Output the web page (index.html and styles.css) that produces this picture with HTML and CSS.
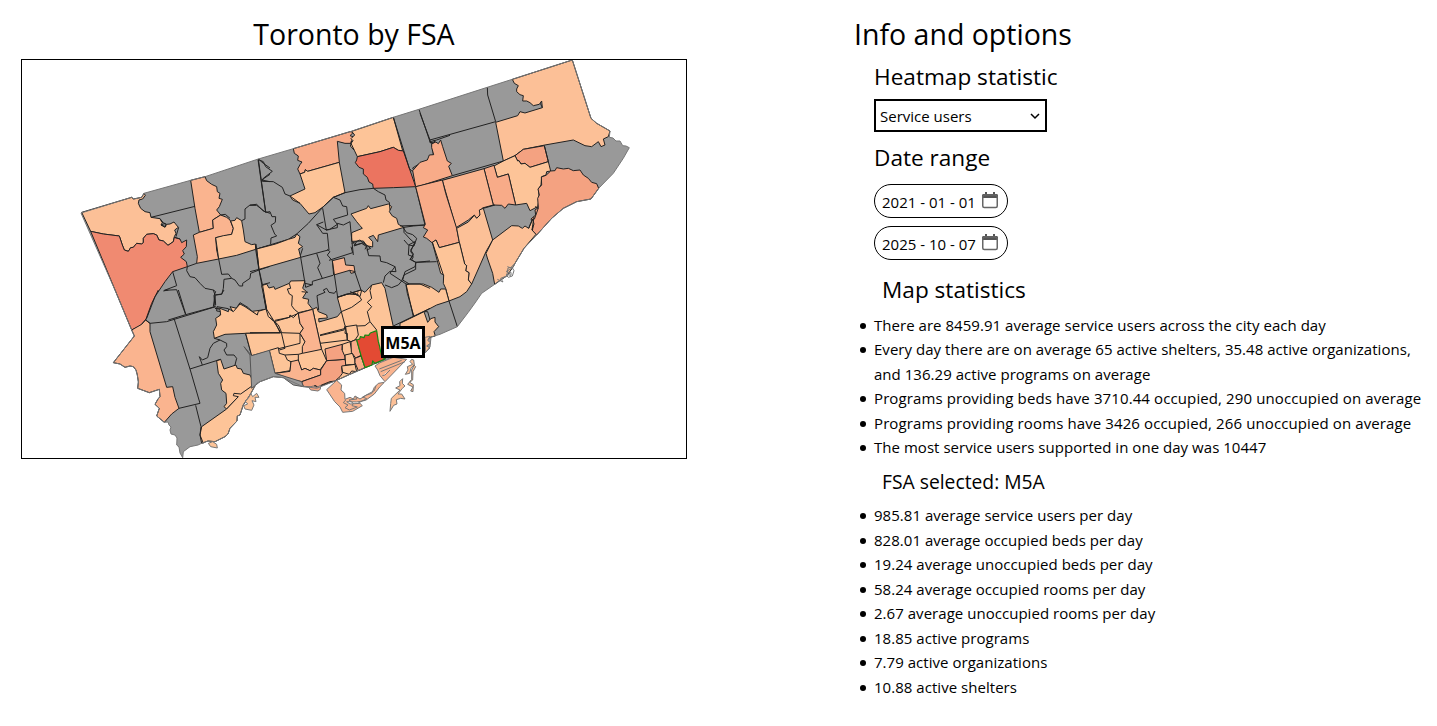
FILE: index.html
```html
<!DOCTYPE html>
<html lang="en">
<head>
<meta charset="utf-8">
<title>Toronto by FSA</title>
<link rel="stylesheet" href="styles.css">
</head>
<body>
<main class="page">
<section class="map-panel">
<h1 class="title">Toronto by FSA</h1>
<div class="map-frame">
<svg class="map" viewBox="22 60 664 398" role="img" aria-label="Toronto FSA heatmap">
<!-- City silhouette -->
<path id="city" class="land" d="M81 213 131.7 197.3 134 199 141.7 197.3 144 193.3 190.7 180.3 205 176.7 258.3 159 293.3 148.7 350 131.7 393.3 117.3 419 109.3 487.3 87.3 512.3 79.3 572.3 60 591 118.3 596.7 123.3 610 131 609.3 137.3 613 138 616 141 620 141 622.7 145.7 626 146 629.3 147.7 623.3 158.3 613.3 173.3 598.7 188.3 591 199 576.7 201.7 563.3 208.3 551.7 218.3 536.7 235 524 248.3 515 263.3 513 267 508 268 506.7 276 500 280 494.7 284.3 481.7 293.3 475 303 468.3 312.3 457.3 326.7 440 334.3 431 337 430 347 425 353 400 354 363.3 368.3 335 381 316.7 388.3 301.7 386 283.3 377.7 273.3 376.7 260 381.7 256.7 383.3 250 395 243 405 240 415 237.3 416 237 421 230 428.3 228 434 225 436.7 215 441.7 208 441 201.7 443.3 198 445 190 446.7 183.3 451.7 182.7 457.7 180 453 179 447 176.7 445 177 438 175 435 171 434 170 430 171 427 169 425 168 422 164.3 422.3 156.7 416 159.3 408.3 155 404.3 158 399 160 396.7 159.3 389.3 149.3 392.7 137.7 388.3 138.5 382 137.3 375 136 370 133.3 366.7 130 366 125 367.3 120 364 113.3 362.7 134.3 336 131.7 330 115 290Z"/>

<!-- North-west -->
<g class="areas" transform="translate(70 140) scale(.33333)">
<path class="c2" d="M35 217 185 172 190 177 215 172 222 160 226 166 218 177 207 180 205 190 212 205 225 215 240 218 243 232 270 236 278 246 273 255 285 262 290 253 300 252 312 246 325 262 314 270 318 280 313 290 310 305 294 316 280 303 267 300 260 285 250 281 230 283 220 295 220 308 215 312 200 310 190 322 182 323 175 334 163 330 157 315 148 288 100 282 62 274Z"/>
<path class="c6" d="M62 274 100 282 148 288 157 315 163 330 175 334 182 323 190 322 200 310 215 312 220 308 220 295 230 283 250 281 260 285 267 300 280 303 294 316 310 305 313 292 330 297 335 308 350 300 349 320 338 332 343 342 332 352 349 365 352 380 308 395 285 425 255 470 230 535 210 558 185 570Z"/>
<path class="c3" d="M362 121 405 110 410 122 425 133 440 140 442 155 450 160 447 175 457 178 448 200 440 210 452 225 428 240 430 265 388 277 375 205Z"/>
<path class="c3" d="M370 285 388 277 430 265 428 240 452 225 470 232 480 240 490 265 485 283 460 289 437 293 440 330 446 357 380 370 382 350Z"/>
<path class="c1" d="M437 293 460 287 485 283 490 265 482 243 495 241 500 233 515 242 520 270 525 305 545 314 556 312 557 328 500 346 446 357Z"/>
<path class="line" d="M243 232 375 199M270 236 275 246 290 253M352 380 380 370M273 255 285 250 287 260ZM308 395 320 437 283 451 320 449 347 524M295 540 347 524 435 500M352 380 350 392 360 410 375 413 390 430 405 445 430 450 437 455 432 467 435 500M446 357 455 403 475 402 485 415 495 420 508 438 518 438 518 430 540 415 542 400 567 390 557 328M485 415 462 418 460 445 455 463 437 465M441 500 440 513 455 515 445 535M441 500 475 506 480 518 500 503 510 488 535 503 557 527 570 512 590 510 600 515M567 390 590 510M515 242 525 237 525 207 540 195 560 193 580 213 600 220M565 57 587 215M565 57 580 70 600 84M575 120 600 103M575 120 600 125M557 328 600 316M567 390 600 379M577 434 600 428M452 225 466 223 480 235M326 262 318 290M313 292 330 297"/>
</g>

<!-- North -->
<g class="areas" transform="translate(250 100) scale(.33333)">
<path class="c4" d="M130 146 300 95 310 97 300 107 309 110 303 130 285 130 262 124 268 187 173 214 166 209 164 217 150 222 143 207 150 194 156 186 143 181 145 168 133 160Z"/>
<path class="c1" d="M305 94 430 52 458 152 445 151 430 142 390 155 322 170 313 151 301 138 304 129 309 122 303 116 314 105Z"/>
<path class="c7" d="M322 170 390 155 430 142 445 151 460 153 497 260 430 263 370 265 368 252 357 246 352 232 340 222 340 207 327 202 316 188 320 180Z"/>
<path class="c1" d="M150 222 164 217 166 209 173 214 268 187 285 278 250 292 220 320 195 338 177 342 150 310 128 300 120 288 165 267Z"/>
<path class="c1" d="M303 342 350 325 355 317 362 326 415 312 425 320 418 335 427 348 440 355 445 373 462 382 385 405 383 425 370 406 356 412 368 425 368 441 350 437 340 423 305 424 305 398 337 385 330 377 320 365Z"/>
<path class="line" d="M24 178 47 337M24 178 40 185 47 200 67 214 40 235 37 244 70 245 97 262 105 282 120 288M0 316 20 316 47 337 60 335 66 350 77 350 76 367 63 376 74 402 80 408 63 414 62 432M20 447 115 418 140 402 175 370 220 320M220 320 250 292 285 278 330 269 370 265M250 292 270 300 278 318 290 320 293 345M293 345 250 358 262 373 238 389 228 390M218 325 229 390 200 374 220 366M200 374 218 400 232 400 237 450M228 390 262 383 262 370 280 375 300 365 303 397 310 465M370 265 385 275 405 285 408 300 418 307 420 330M462 382 490 378 525 375 497 260 525 256 600 235M430 52 478 205 485 213 493 214 488 204M488 204 510 190 530 182 550 165 547 135M507 28 540 125 560 120 600 106M540 125 545 132 555 130 552 120M462 382 462 397 480 417 495 430 482 450 490 462 480 480M303 124 303 130 313 151M320 425 312 438 340 428 362 445 350 450M120 288 150 310M158 445 150 470"/>
</g>

<!-- North-east -->
<g class="areas" transform="translate(420 55) scale(.33333)">
<path class="c4" d="M-22 347 0 322 22 315 28 300 41 299 35 278 35 267 47 261 55 266 62 255 68 275 82 318 94 325 86 334 97 362 0 393 -13 395Z"/>
<path class="c2" d="M277 73 457 15 513 190 530 205 570 228 565 245 550 252 555 270 543 275 535 260 515 275 495 272 460 255 375 270 310 283 285 302 250 318 227 202 293 182 300 170 315 174 367 158 365 138 358 148 340 152 330 143 320 138 308 138 310 122 300 119 290 110 290 102 295 92 283 85Z"/>
<path class="c5" d="M285 302 310 283 373 272 385 320 330 337 315 325 303 327 297 317 293 318Z"/>
<path class="c1" d="M222 333 250 318 285 302 293 318 297 317 303 327 315 325 330 337 385 320 392 348 380 350 378 360 365 365 363 390 355 402 358 430 353 455 330 467 320 445 287 450 265 357 232 367Z"/>
<path class="c5" d="M392 348 405 347 410 338 430 342 445 340 460 347 480 345 490 360 505 370 515 382 530 386 536 400 513 432 470 440 430 460 395 490 350 540 337 530 340 505 333 492 347 480 345 465 355 458 353 430 358 420 354 402 365 390 364 366 378 361Z"/>
<path class="c4" d="M192 341 222 331 232 367 265 357 287 450 265 447 255 460 245 451 220 450Z"/>
<path class="c3" d="M67 376 192 341 220 450 187 459 180 480 170 490 163 480 145 495 108 518Z"/>
<path class="line" d="M202 97 203 120 227 200M0 175 30 255 227 200M30 255 30 263 47 261M97 362 250 318M367 158 361 145M373 272 385 320"/>
</g>

<!-- East -->
<g class="areas" transform="translate(400 150) scale(.33333)">
<path class="c4" d="M47 110 127 90 137 130 170 235 178 277 118 293 108 270 96 278 80 265 70 261 83 240 70 233 76 223Z"/>
<path class="c2" d="M170 235 205 216 223 196 230 205 240 195 238 180 250 175 278 270 258 305 215 402 205 390 207 368 197 362 200 347 194 342 178 277Z"/>
<path class="c1" d="M97 277 108 270 118 293 178 277 194 342 200 347 197 362 207 368 205 390 215 402 200 425 180 440 147 453 137 415 130 400 131 375 122 370Z"/>
<path class="c2" d="M278 270 335 227 355 228 367 235 375 228 386 235 398 207 402 222 396 240 408 253 372 295 345 340 340 350 320 378 284 403 278 370 262 324 258 310Z"/>
<path class="c1" d="M18 405 28 402 70 402 95 412 117 427 122 417 137 417 147 453 110 465 72 485 42 500 22 430Z"/>
<path class="c1" d="M0 520 72 485 83 517 92 506 105 502 105 516 116 530 102 545 106 558 90 562 80 570 0 560Z"/>
<path class="line" d="M147 453 172 530M97 277 130 375M250 175 285 165M386 235 398 207M405 170 415 174 403 208M0 228 75 225M10 234 20 248 38 254 50 265 42 288 27 285 25 315 40 320 35 330 48 337 80 336 110 335M48 337 45 350 15 365 8 390 28 402M402 200 396 240"/>
<path class="shore" d="M345 340 335 350 342 362 337 378 325 382 318 375 330 370 319 364 336 355 322 350M320 378 302 385 309 396 292 388M326 366 333 367 333 376 323 374"/>
</g>

<!-- Central districts -->
<g class="areas" transform="translate(250 220) scale(.33333)">
<path class="c1" d="M20 87 77 72 115 58 135 52 140 42 150 50 145 70 158 80 146 87 152 112 27 148Z"/>
<path class="c3" d="M247 122 283 113 287 135 312 137 315 157 303 160 299 151 251 165Z"/>
<path class="c1" d="M35 197 50 192 57 204 72 200 75 208 118 190 122 183 165 182 158 205 170 215 158 234 176 238 174 250 188 268 200 262 205 275 230 285 232 294 206 296 207 306 262 290 274 275 262 232 333 210 345 217 365 195 395 188 405 205 430 320 405 417 345 443 255 483 205 500 155 498 130 480 70 460 57 390 5 407 -13 342 -60 260 0 275 50 268Z"/>
<path class="line" d="M18 72 20 87 27 148 38 197 50 268M0 155 27 148M0 270 20 285 30 272 50 268M152 112 165 190 187 195 187 184 249 166M152 112 235 90M200 100 210 130 203 143 217 175M232 88 240 95 232 105 247 122 263 232M237 121 308 98 303 80M299 151 316 155M315 157 333 210M165 190 167 202 185 195M225 217 201 227 206 270M225 217 220 210 230 205 237 217 253 220 258 213M262 232 333 210M155 215 174 217M335 211 330 230 305 218M308 65 315 75 335 70 350 80 356 107 390 108 392 124 410 128 435 140 438 155 420 154 405 168 400 188M435 140 420 160 455 183 445 195 425 203 405 195M455 183 462 165 497 148 497 127 540 123M462 60 475 75 495 65 482 95 490 105 480 118 497 127M455 183 468 192 480 245 490 290M468 192 510 192 540 205M525 275 533 275 540 300M430 318 540 265M305 70 330 60 350 78 345 88M300 215 320 222 325 217"/>
<path class="line" d="M118 190 122 205 112 207 118 222 127 227 125 257 133 268 145 278M75 301 118 292 120 285 130 293 145 278 188 268M50 268 72 303 85 315 95 338M262 232 290 222 325 224 335 240 305 262 274 275M274 275 285 317 282 330 210 347M188 268 215 390M145 278 150 310 160 325 150 340 165 365 157 405M365 195 360 212 365 235 352 247 365 260 352 275 360 305 345 317 322 318 300 330 285 317M360 305 380 330"/>
</g>

<!-- South-west -->
<g class="areas" transform="translate(100 290) scale(.33333)">
<path class="c1" d="M345 55 360 55 385 65 387 57 400 65 420 42 435 50 472 75 475 64 498 57 505 80 525 95 540 128 437 130 375 133 343 145 340 125 350 105 347 85 362 75 360 58Z"/>
<path class="c1" d="M437 130 540 128 600 130 600 160 508 183 455 197Z"/>
<path class="c3" d="M95 120 125 103 137 90 150 100 150 125 200 292 218 290 225 322 237 355 215 372 193 397 170 378 178 355 165 343 174 327 180 320 178 298 148 308 113 295 115 276 112 255 108 240 100 230 90 228 75 232 60 222 40 218 103 138Z"/>
<path class="c1" d="M350 212 362 208 372 237 408 225 412 235 424 237 430 250 450 255 460 275 470 280 415 320 380 357 372 350 380 340 378 310 365 300 362 280 368 270 355 250Z"/>
<path class="c1" d="M305 410 380 357 415 320 400 317 402 310 422 312 470 278 450 315 430 345 420 375 412 378 411 393 390 415 384 432 375 440 345 455 324 453 305 460 300 435Z"/>
<path class="line" d="M137 90 150 100 200 95 347 50M137 90 155 40 175 0M235 0 257 72M222 85 270 237 300 340 237 355M270 237 362 208M287 346 303 410 300 435 310 460M307 225 298 200 307 210 323 203 330 175 340 160 360 150 380 160 380 170 372 180 380 195 402 195 410 205 405 225M343 145 360 150M340 0 345 15 340 50"/>
<path class="line" d="M498 57 490 10M508 183 527 250 540 252M347 45 345 15 365 12 372 0M190 3 205 0"/>
<path class="c1 shore" d="M452 310 458 320 470 310 477 322 465 322 468 335 456 332 462 345 455 361 435 357 431 347 443 342 435 333 445 325ZM325 460 338 455 350 463 352 474 332 470Z"/>
</g>

<!-- Downtown and islands -->
<g class="areas" transform="translate(250 310) scale(.33333)">
<path class="c3" d="M145 10 188 -2 215 120 157 135 157 110 165 95 150 70 160 55 150 40Z"/>
<path class="c1" d="M58 121 85 113 88 130 105 135 112 150 123 155 120 182 75 190Z"/>
<path class="c1" d="M145 133 157 130 215 118 230 152 210 180 190 175 180 182 165 175 155 180 145 155Z"/>
<path class="c3" d="M75 190 120 184 123 155 145 150 155 180 165 175 180 182 190 175 212 180 212 195 155 215 130 210Z"/>
<path class="c5" d="M155 215 212 195 212 180 230 152 285 148 289 166 275 172 277 190 270 200 255 213 240 215 215 225 205 232 195 226 188 232 160 230Z"/>
<path class="c5" d="M225 117 277 103 276 120 285 128 285 148 230 152Z"/>
<path class="c1" d="M287 50 320 45 325 75 315 90 303 95 292 90 292 70 285 70Z"/>
<path class="c1" d="M277 103 300 95 307 130 285 140 277 122Z"/>
<path class="c4" d="M303 95 320 88 333 136 317 144 304 127Z"/>
<path class="c1" d="M285 135 307 130 315 150 315 163 287 165Z"/>
<path class="c4" d="M315 145 333 138 345 173 325 182 315 158Z"/>
<path class="c1" d="M275 168 300 165 315 163 320 185 305 183 298 193 278 187Z"/>
<path class="line" d="M0 68 90 69M60 23 72 35 95 72 105 115 88 120M72 35 115 23 145 10M210 100 292 90M105 135 145 133M287 50 292 92M210 75 287 55"/>
<path class="harbor" d="M0 135 -18 110 5 137 58 121 75 190 155 215 160 230 130 225 100 203 70 200 30 215 5 235Z"/>
<path class="c3 shore" d="M375 168 390 158 430 142 470 148 405 215 390 197 383 180ZM388 177 455 151M392 185 465 155M397 197 405 195 420 180"/>
<path class="c2 shore" d="M485 148 480 155 488 163 472 170 474 180 466 193 479 190 483 175 492 165 497 170 489 185 488 210 479 217 490 224 489 245 482 243 489 231 473 223 485 208 485 180 493 165 491 150Z"/>
<path class="c2 shore" d="M458 206 449 215 450 227 437 234 450 240 424 265 422 281 420 304 431 286 441 282 439 269 452 265 465 267 455 252 444 252 457 235 465 228 457 220Z"/>
<path class="c3 shore" d="M230 239 260 211 275 225 273 240 284 250 285 268 300 262 310 267 315 258 330 267 350 255 365 250 373 232 385 220 403 217 390 230 373 252 347 271 320 276 290 275 300 282 330 280 337 287 308 304 278 307 270 291 254 275Z"/>
<path class="shore" d="M287 270 280 278 294 285 285 293 298 300 322 291 306 287 310 280 297 270 321 267 317 260M323 280 350 266 338 261 373 242 378 227"/>
<path class="c5 shore" d="M176 232 190 228 200 232 212 226 211 238 204 243 182 240Z"/>
<path class="c2 shore" d="M525 82 540 79 533 91 542 99 530 108 540 114 527 127Z"/>
</g>
<use href="#city" class="coast"/>
<g class="areas" transform="translate(250 310) scale(.33333)">
<path class="selected" d="M320 90 329 87 331 80 342 83 345 75 356 76 361 69 380 62 385 95 389 110 395 140 405 147 375 160 368 153 366 165 345 173 333 136Z"/>
</g>
</svg>
<div class="tooltip">M5A</div>
</div>
</section>

<section class="info">
<h1 class="title">Info and options</h1>
<div class="options">
<h2 class="sub heatmap-title">Heatmap statistic</h2>
<div class="select"><span>Service users</span><svg class="chevron" viewBox="0 0 10 7"><path d="M1 1 5 5 9 1"/></svg></div>
<h2 class="sub date-title">Date range</h2>
<div class="date"><span>2021 - 01 - 01</span><svg class="calendar" viewBox="0 0 16 17"><path class="cal-top" d="M1 2h2V0h2v2h6V0h2v2h2l1 1v3H0V3Z"/><rect class="cal-body" x=".75" y="3" width="14.5" height="12.5" rx="1.5"/></svg></div>
<div class="date"><span>2025 - 10 - 07</span><svg class="calendar" viewBox="0 0 16 17"><path class="cal-top" d="M1 2h2V0h2v2h6V0h2v2h2l1 1v3H0V3Z"/><rect class="cal-body" x=".75" y="3" width="14.5" height="12.5" rx="1.5"/></svg></div>
</div>
<h2 class="sub stats-title">Map statistics</h2>
<ul class="list">
<li>There are 8459.91 average service users across the city each day</li>
<li>Every day there are on average 65 active shelters, 35.48 active organizations,<br>and 136.29 active programs on average</li>
<li class="wide">Programs providing beds have 3710.44 occupied, 290 unoccupied on average</li>
<li class="wide">Programs providing rooms have 3426 occupied, 266 unoccupied on average</li>
<li>The most service users supported in one day was 10447</li>
</ul>
<h3 class="fsa-title">FSA selected: M5A</h3>
<ul class="list">
<li>985.81 average service users per day</li>
<li>828.01 average occupied beds per day</li>
<li>19.24 average unoccupied beds per day</li>
<li>58.24 average occupied rooms per day</li>
<li>2.67 average unoccupied rooms per day</li>
<li>18.85 active programs</li>
<li>7.79 active organizations</li>
<li>10.88 active shelters</li>
</ul>
</section>
</main>
</body>
</html>
```
FILE: styles.css
```css
* { box-sizing: border-box; }
body {
  margin: 0;
  background: #fff;
  color: #000;
  font: 15px/24.5px "Open Sans", "Noto Sans", sans-serif;
  overflow: hidden;
}
h1, h2, h3, ul { margin: 0; padding: 0; font-weight: 400; }
.page { display: flex; }
.map-panel { width: 666px; margin-left: 21px; padding-top: 11px; }
.title { font-size: 28.5px; line-height: 46px; white-space: nowrap; }
.map-panel .title { text-align: center; }
.map-frame {
  position: relative;
  width: 666px;
  height: 400px;
  margin-top: 2px;
  border: 1px solid #000;
}
.map { display: block; width: 664px; height: 398px; }
.map path { stroke-linejoin: round; vector-effect: non-scaling-stroke; }
.land { fill: #999; }
.coast { fill-opacity: 0; stroke: #777; stroke-width: 1; }
.areas path { stroke: #222; stroke-width: 1; }
.areas .c1 { fill: #fdc498; }
.areas .c2 { fill: #fcc097; }
.areas .c3 { fill: #fab48f; }
.areas .c4 { fill: #f8ab88; }
.areas .c5 { fill: #f4a281; }
.areas .c6 { fill: #f08a71; }
.areas .c7 { fill: #eb7460; }
.areas .line { fill: none; }
.areas .shore { stroke: #777; }
.areas .shore:not(.c1):not(.c2):not(.c3):not(.c5) { fill: none; }
.areas .harbor { fill: #999; stroke: #555; }
.areas .selected { fill: #e34a33; stroke: #138a13; stroke-width: 1.2; }
.tooltip {
  position: absolute;
  left: 359px;
  top: 266px;
  width: 44px;
  height: 32px;
  border: 3px solid #000;
  background: #fff;
  font-size: 16px;
  font-weight: 700;
  line-height: 29px;
  text-align: center;
}
.info { margin-left: 167px; padding-top: 11px; white-space: nowrap; }
.options { padding-left: 20px; }
.sub { font-size: 22.6px; line-height: 36px; }
.heatmap-title { padding-top: 2px; }
.select {
  display: flex;
  align-items: center;
  justify-content: space-between;
  width: 173px;
  height: 33px;
  margin-top: 4px;
  padding: 2px 5px 0 4px;
  border: 2px solid #000;
}
.chevron { width: 10px; height: 7px; fill: none; stroke: #000; stroke-width: 1.5; }
.date-title { margin-top: 8px; }
.date {
  display: flex;
  align-items: center;
  justify-content: space-between;
  width: 134px;
  height: 34px;
  margin-top: 8px;
  padding: 2px 9px 0 7px;
  border: 1px solid #000;
  border-radius: 17px;
}
.calendar { width: 16px; height: 17px; margin-top: -4px; }
.cal-top { fill: #555; }
.cal-body { fill: none; stroke: #666; stroke-width: 1.5; }
.stats-title { margin: 12px 0 4.5px; padding-left: 28px; }
.list { padding-left: 20px; list-style: none; letter-spacing: .035px; }
.list li::before {
  content: "";
  display: inline-block;
  width: 6px;
  height: 6px;
  margin: 0 8px 2px -14px;
  border-radius: 50%;
  background: #000;
}
.list .wide { letter-spacing: .11px; }
.fsa-title { margin: 6px 0 5.5px; padding-left: 28px; font-size: 19.3px; line-height: 32px; }
```
